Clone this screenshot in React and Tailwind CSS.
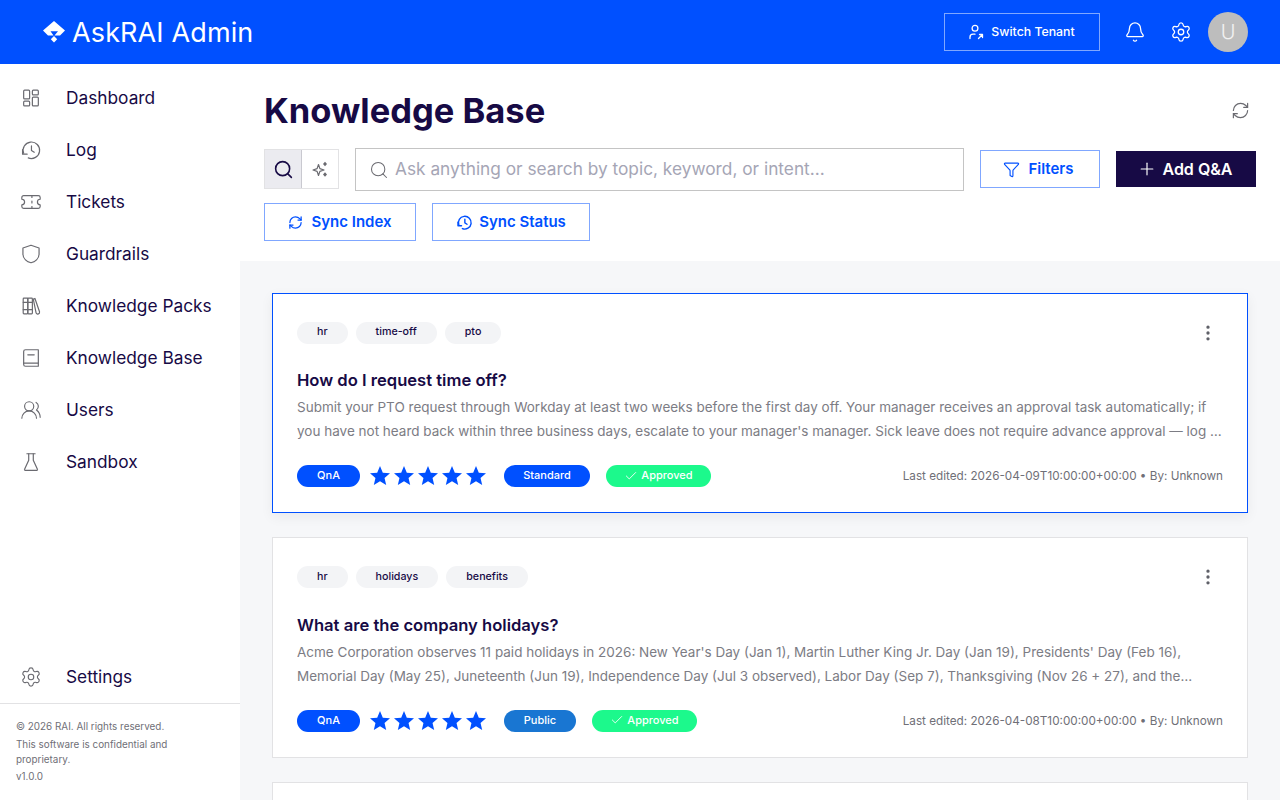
import {
  Bell,
  Check,
  EllipsisVertical,
  Funnel,
  Plus,
  RefreshCw,
  Search,
  Settings,
  Ticket,
  UsersRound,
} from 'lucide-react';

// line icons that lucide has no close match for
function Line({ size = 22, strokeWidth = 1.3, className = 'text-[#6a6a70]', children }) {
  return (
    <svg
      width={size}
      height={size}
      viewBox="0 0 24 24"
      fill="none"
      stroke="currentColor"
      strokeWidth={strokeWidth}
      strokeLinecap="round"
      strokeLinejoin="round"
      className={className}
    >
      {children}
    </svg>
  );
}

const DashboardIcon = () => (
  <Line>
    <rect x="4" y="3.500" width="6.500" height="9.500" rx="1" />
    <rect x="13.500" y="3.500" width="6.500" height="5" rx="1" />
    <rect x="4" y="15.500" width="6.500" height="5" rx="1" />
    <rect x="13.500" y="11" width="6.500" height="9.500" rx="1" />
  </Line>
);

const historyPaths = (
  <>
    <path d="M4 15.500A9 9 0 1 1 9 20.600" />
    <path d="M2.800 11.500v5h5" />
    <path d="M12.500 7.500v5l3 2" />
  </>
);

const LogIcon = () => <Line>{historyPaths}</Line>;

const TicketIcon = () => <Ticket size={22} strokeWidth={1.3} className="text-[#6a6a70]" />;

const ShieldIcon = () => (
  <Line>
    <path d="M12 2.400 20.800 5.400V12c0 5-4.400 8.400-8.800 9.600C7.600 20.400 3.200 17 3.200 12V5.400Z" />
  </Line>
);

const PacksIcon = () => (
  <Line>
    <rect x="3.500" y="3.500" width="5" height="17" rx="0.8" />
    <rect x="8.500" y="3.500" width="5" height="17" rx="0.8" />
    <path d="M3.500 8h10M3.500 16h10" />
    <path d="m14.500 4.500 1.800-.700 5 14.500a2 2 0 0 1-3.700 1.400z" />
  </Line>
);

const BookIcon = () => (
  <Line>
    <path d="M6 3h14v18H6a2 2 0 0 1-2-2V5a2 2 0 0 1 2-2Z" />
    <path d="M4 17.500h16" />
    <path d="M8.500 8.500h7" />
  </Line>
);

const UsersIcon = () => <UsersRound size={22} strokeWidth={1.25} className="text-[#6a6a70]" />;

const FlaskIcon = () => (
  <Line>
    <path d="M7.500 3h9" />
    <path d="M9.500 3v7L5 20a.8.8 0 0 0 .7 1.200h12.600a.8.8 0 0 0 .7-1.200l-4.500-10V3" />
  </Line>
);

const SettingsIcon = () => <Settings size={22} strokeWidth={1.25} className="text-[#6a6a70]" />;

const nav = [
  { label: 'Dashboard', icon: DashboardIcon },
  { label: 'Log', icon: LogIcon },
  { label: 'Tickets', icon: TicketIcon },
  { label: 'Guardrails', icon: ShieldIcon },
  { label: 'Knowledge Packs', icon: PacksIcon },
  { label: 'Knowledge Base', icon: BookIcon },
  { label: 'Users', icon: UsersIcon },
  { label: 'Sandbox', icon: FlaskIcon },
];

const cards = [
  {
    tags: ['hr', 'time-off', 'pto'],
    title: 'How do I request time off?',
    body: "Submit your PTO request through Workday at least two weeks before the first day off. Your manager receives an approval task automatically; if you have not heard back within three business days, escalate to your manager's manager. Sick leave does not require advance approval — log it in Workday when you return to work after your absence.",
    access: 'Standard',
    accessClass: 'w-[86px] bg-[#0050ff]',
    edited: 'Last edited: 2026-04-09T10:00:00+00:00 • By: Unknown',
    selected: true,
  },
  {
    tags: ['hr', 'holidays', 'benefits'],
    title: 'What are the company holidays?',
    body: "Acme Corporation observes 11 paid holidays in 2026: New Year's Day (Jan 1), Martin Luther King Jr. Day (Jan 19), Presidents' Day (Feb 16), Memorial Day (May 25), Juneteenth (Jun 19), Independence Day (Jul 3 observed), Labor Day (Sep 7), Thanksgiving (Nov 26 + 27), and the winter break from December 24 through December 31 for all staff.",
    access: 'Public',
    accessClass: 'w-[72px] bg-[#1976d2]',
    edited: 'Last edited: 2026-04-08T10:00:00+00:00 • By: Unknown',
    selected: false,
  },
];

function Logo() {
  return (
    <svg width="22" height="22" viewBox="0 0 22 22" fill="white">
      <path d="M11 0 22 9.500 17 14.500H11.500L15 10.200H7.500L10.500 14.500H5L0 9.500Z" />
      <path d="M11 15 14.200 18.200 11 21.500 7.800 18.200Z" />
    </svg>
  );
}

function SwitchUser() {
  return (
    <svg width="16" height="16" viewBox="0 0 16 16" fill="none" stroke="white" strokeWidth="1.3" strokeLinecap="round" strokeLinejoin="round">
      <circle cx="7" cy="4.200" r="2.900" />
      <path d="M2 14.500v-1.300a3 3 0 0 1 3-3h2" />
      <path d="M10.500 14.500l4-4M11.500 10.500h3v3" />
    </svg>
  );
}

function AiSearch() {
  return (
    <svg width="16" height="16" viewBox="0 0 16 16" className="text-[#6a6a70]">
      <path
        d="M6.500 3.500 7.900 7.600 12 9 7.900 10.400 6.500 14.500 5.100 10.400 1 9 5.100 7.600Z"
        fill="none"
        stroke="currentColor"
        strokeWidth="1.200"
        strokeLinejoin="round"
      />
      <path d="M13 .8 15 3 13 5.200 11 3Z" fill="currentColor" />
      <path d="M13 11.300 15 13.500 13 15.700 11 13.500Z" fill="currentColor" />
    </svg>
  );
}

function FilledStar() {
  return (
    <svg width="24" height="24" viewBox="0 0 24 24" fill="#0050ff">
      <path d="M12 17.270 18.180 21l-1.640-7.030L22 9.240l-7.190-.610L12 2 9.190 8.630 2 9.240l5.460 4.730L5.820 21z" />
    </svg>
  );
}

function Tag({ children }) {
  return (
    <span className="flex h-[22px] items-center rounded-full bg-[#f3f4f6] px-5 pb-px text-[10.7px] font-medium text-[#170a45]">
      {children}
    </span>
  );
}

function Card({ card }) {
  return (
    <article
      className={`h-[220.4px] shrink-0 border bg-white px-6 pt-7 ${
        card.selected ? 'border-[#0050ff] shadow-[0_4px_12px_rgba(0,0,0,0.06)]' : 'border-[#e2e2e4]'
      }`}
    >
      <div className="flex items-center justify-between">
        <div className="flex gap-2">
          {card.tags.map((tag) => (
            <Tag key={tag}>{tag}</Tag>
          ))}
        </div>
        <EllipsisVertical size={20} strokeWidth={2} className="mr-[5px] text-[#5f6068]" />
      </div>
      <h2 className="mt-[24.2px] text-[16.6px] leading-[24px] font-semibold text-[#170a45]">{card.title}</h2>
      <p className="mt-[3px] line-clamp-2 text-[13.5px] leading-6 text-[#7c7c84]">{card.body}</p>
      <div className="mt-[21px] flex items-center">
        <span className="flex h-[22px] w-[63px] items-center justify-center rounded-full bg-[#0050ff] pb-px text-[11px] font-medium text-white">
          QnA
        </span>
        <div className="ml-2 flex">
          {[0, 1, 2, 3, 4].map((i) => (
            <FilledStar key={i} />
          ))}
        </div>
        <span className={`ml-4 flex h-[22px] items-center justify-center rounded-full pb-px text-[11px] font-medium text-white ${card.accessClass}`}>
          {card.access}
        </span>
        <span className="ml-4 flex h-[22px] w-[105px] items-center justify-center gap-[3px] rounded-full bg-[#1cf98c] pb-px text-[11px] font-medium text-white">
          <Check size={14} strokeWidth={1.5} />
          Approved
        </span>
        <span className="ml-auto pt-[2px] text-[11.72px] text-[#6f6f77]">{card.edited}</span>
      </div>
    </article>
  );
}

export default function App() {
  return (
    <div className="flex h-screen flex-col overflow-hidden bg-white font-['Inter',sans-serif] text-[#170a45]">
      <header className="flex h-16 shrink-0 items-center bg-[#0050ff] pr-8 pl-[43px] text-white">
        <Logo />
        <span className="ml-[7px] text-[27px] leading-none font-normal tracking-[0.13px]">AskRAI Admin</span>
        <button className="ml-auto flex h-[38px] w-[156px] items-center justify-center gap-[7px] border border-white/50 pr-px text-[12.3px] font-medium">
          <SwitchUser />
          Switch Tenant
        </button>
        <Bell size={22} strokeWidth={1.4} className="ml-6" />
        <Settings size={22} strokeWidth={1.4} className="ml-6" />
        <div className="ml-4 flex h-10 w-10 items-center justify-center rounded-full bg-[#bdbdbd] text-[20px] font-light text-white/80">
          U
        </div>
      </header>

      <div className="flex min-h-0 flex-1">
        <aside className="flex w-60 shrink-0 flex-col bg-white pt-2">
          <nav className="flex flex-col">
            {nav.map(({ label, icon: Icon }) => (
              <a key={label} className="flex h-[52px] items-center gap-6 pl-5 text-[17.3px]">
                <Icon />
                {label}
              </a>
            ))}
          </nav>
          <a className="mt-auto flex h-[52px] items-center gap-6 pl-5 text-[17.3px]">
            <SettingsIcon />
            Settings
          </a>
          <div className="h-[97px] border-t border-[#e2e2e4] pt-[15px] pr-[60px] pl-4 text-[9.9px] leading-[14.5px] text-[#6f6f77]">
            <p>© 2026 RAI. All rights reserved.</p>
            <p className="mt-[3.5px]">This software is confidential and proprietary.</p>
            <p className="mt-[3px]">v1.0.0</p>
          </div>
        </aside>

        <main className="flex min-w-0 flex-1 flex-col">
          <section className="h-[197px] shrink-0 bg-white px-6 pt-6">
            <div className="flex items-center justify-between">
              <h1 className="text-[34.5px] leading-[46px] font-bold text-[#170a45]">Knowledge Base</h1>
              <RefreshCw size={19} strokeWidth={1.5} className="mr-[6px] -mt-0.5 text-[#6a6a70]" />
            </div>
            <div className="mt-[14px] flex items-center">
              <div className="-mt-px flex h-10 w-[75px] border border-[#e2e2e4]">
                <span className="flex w-[37px] items-center justify-center border-r border-[#c9c9d0] bg-[#ebebf0]">
                  <Search size={21} strokeWidth={1.8} />
                </span>
                <span className="flex flex-1 items-center justify-center">
                  <AiSearch />
                </span>
              </div>
              <div className="ml-4 flex h-[43px] w-[609px] items-center border border-[#c4c4c4] pl-[13px]">
                <Search size={20} strokeWidth={1.25} className="text-[#6a6a70]" />
                <span className="ml-[6px] pb-[2px] text-[17.3px] text-[#a5a5b5]">Ask anything or search by topic, keyword, or intent...</span>
              </div>
              <button className="-mt-px ml-4 flex h-[38px] w-[120px] items-center justify-center gap-2 border border-[#80a7ff] pr-[3px] text-[15px] font-semibold text-[#0050ff]">
                <Funnel size={17} strokeWidth={1.6} />
                Filters
              </button>
              <button className="-mt-px ml-4 flex h-9 w-[140px] items-center justify-center gap-[5px] bg-[#170a45] pr-[2px] text-[16px] font-semibold text-white">
                <Plus size={20} strokeWidth={1.4} />
                Add Q&amp;A
              </button>
            </div>
            <div className="mt-[12px] flex gap-4">
              <button className="flex h-[38px] w-[152px] items-center justify-center gap-2 border border-[#80a7ff] text-[15px] font-semibold text-[#0050ff]">
                <RefreshCw size={15} strokeWidth={2} />
                Sync Index
              </button>
              <button className="flex h-[38px] w-[158px] items-center justify-center gap-[6px] border border-[#80a7ff] text-[15px] font-semibold text-[#0050ff]">
                <Line size={17} strokeWidth={2} className="text-[#0050ff]">
                  {historyPaths}
                </Line>
                Sync Status
              </button>
            </div>
          </section>
          <section className="flex min-h-0 flex-1 flex-col gap-6 overflow-hidden bg-[#f6f7f9] px-8 pt-8">
            {cards.map((card) => (
              <Card key={card.title} card={card} />
            ))}
            <div className="h-[220px] shrink-0 border border-[#e2e2e4] bg-white" />
          </section>
        </main>
      </div>
    </div>
  );
}
